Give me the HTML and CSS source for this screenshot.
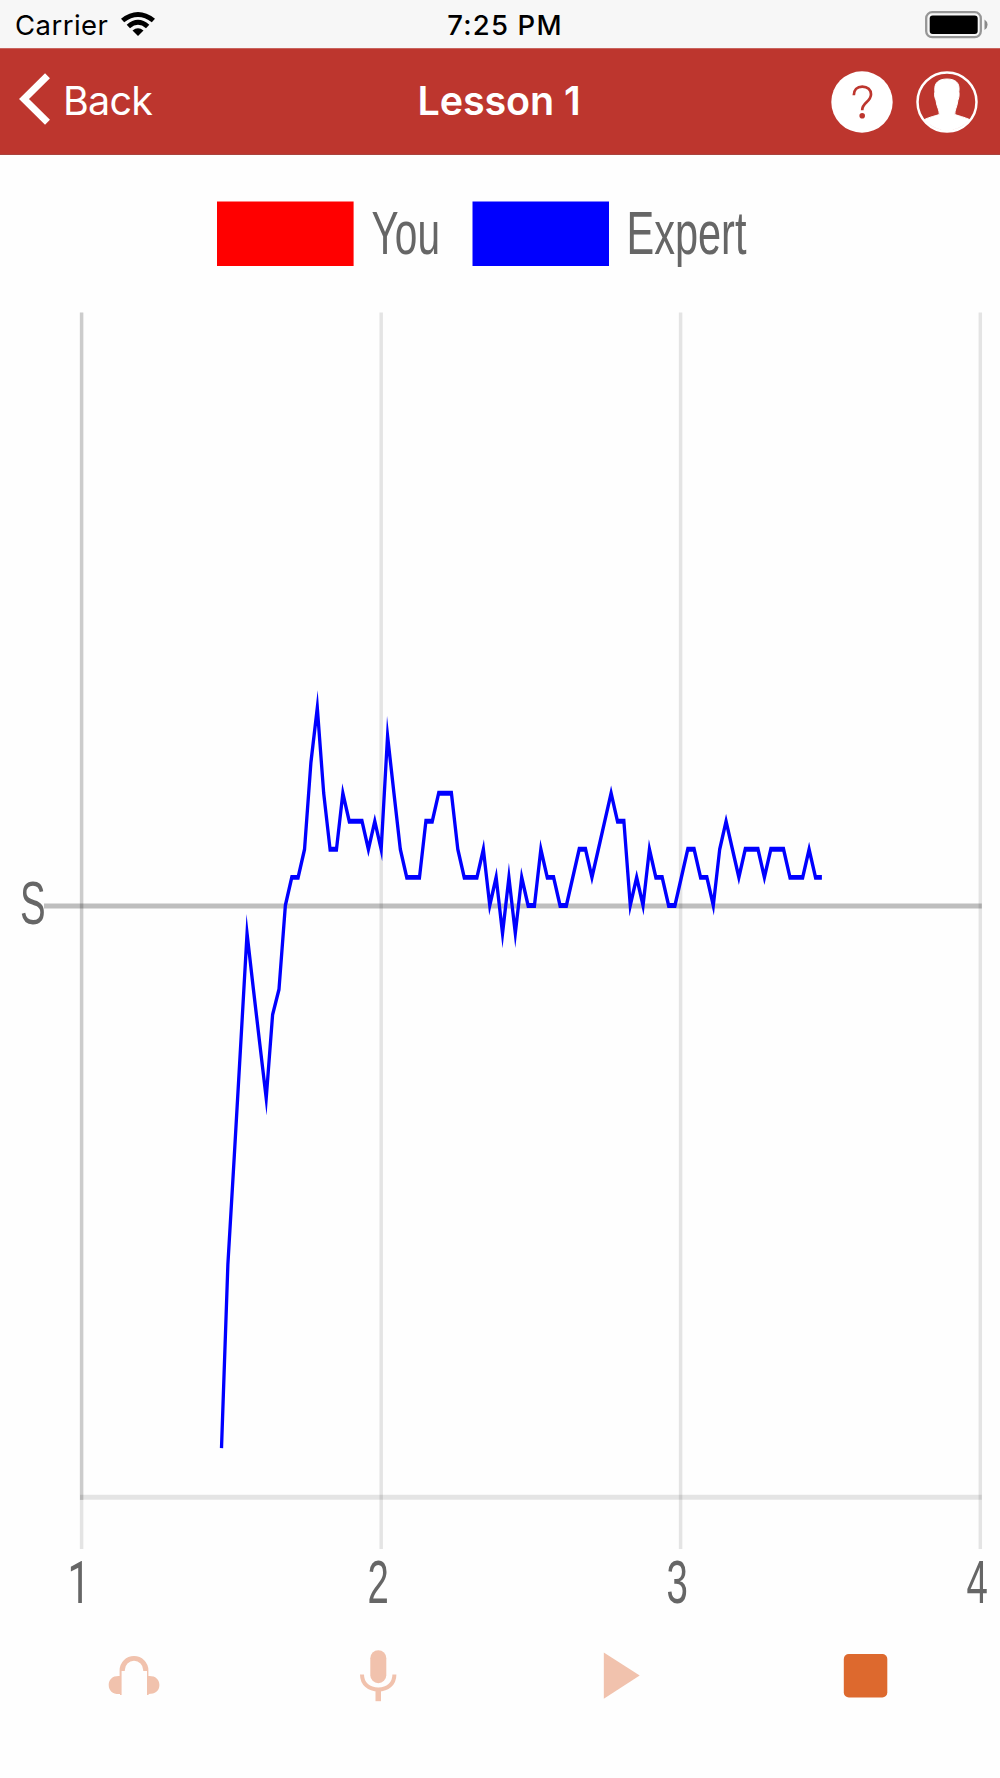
FILE: index.html
```html
<!DOCTYPE html>
<html lang="en">
<head>
<meta charset="utf-8">
<title>Lesson 1</title>
<link rel="stylesheet" href="styles.css">
</head>
<body>
<div class="status">
  <div class="carrier"><span class="carrier-name">Carrier</span>
    <svg class="wifi" width="34" height="24" viewBox="0 0 34 24">
      <path d="M0 6.7Q17-6.700 34 6.7L30.800 10.200Q17-0.200 3.200 10.200Z"/>
      <path d="M5.7 12.8Q17 2.800 28.3 12.8L25 16.200Q17 9.5 9 16.200Z"/>
      <path d="M11.5 18.6Q17 14 22.5 18.6L17 24Z"/>
    </svg>
  </div>
  <div class="clock">7:25 PM</div>
  <svg class="battery" width="64" height="28" viewBox="0 0 64 28">
    <rect x="1.2" y="1.2" width="54.6" height="25" rx="6" fill="none" stroke="#969696" stroke-width="2.3"/>
    <rect x="4.7" y="4.6" width="48" height="18.4" rx="3"/>
    <path d="M59.5 8.5Q62.6 10.5 62.6 13.7T59.5 19Z" fill="#8a8a8a"/>
  </svg>
</div>
<header class="nav">
  <div class="back">
    <svg width="31" height="52" viewBox="0 0 31 52"><path d="M28.5 2.8L5 26L28.5 49.3" fill="none" stroke="#fff" stroke-width="7"/></svg>
    <span>Back</span>
  </div>
  <h1 class="title">Lesson 1</h1>
  <div class="actions">
    <svg width="62" height="62" viewBox="0 0 62 62">
      <circle cx="31" cy="31" r="30.7" fill="#fff"/>
      <path d="M22.8 24.3C22.8 19 26 15.6 31.3 15.6C36.7 15.6 40 19 40 23.3C40 27 38 29 35.5 31.3C32.5 34 31.2 35.5 31.2 39.2" fill="none" stroke="#bd362e" stroke-width="2.7"/>
      <circle cx="31.2" cy="44.8" r="2.8" fill="#bd362e"/>
    </svg>
    <svg width="62" height="62" viewBox="0 0 62 62">
      <circle cx="31" cy="31" r="29.5" fill="none" stroke="#fff" stroke-width="2.5"/>
      <path d="M31 8C23 8 18.3 11.5 18.8 19C19 21 18.3 22 18.7 25C19 28 20 28.5 20.3 31C20.8 36 23.3 38.5 23.3 43.5C19 45 13.5 46 8.5 48.5A28.500 28.500 0 0 0 53.5 48.5C48 46 43 45 38.8 43.5C38.8 38.5 41 36 41.6 31C41.9 28.5 42.7 28 43 25C43.3 22 42.7 21 43 19C43.7 11.5 39 8 31 8Z" fill="#fff" stroke="#fff" stroke-width="1"/>
    </svg>
  </div>
</header>
<main>
  <svg class="chart" width="1000" height="1460" viewBox="0 155 1000 1460">
    <rect x="217" y="201.5" width="136.6" height="64.5" fill="#f00"/>
    <rect x="472.5" y="201.5" width="136.5" height="64.5" fill="#00f"/>
    <g class="labels">
      <text transform="translate(371.5 253.5) scale(.662 1)">You</text>
      <text transform="translate(626.5 253.5) scale(.676 1)">Expert</text>
      <text transform="translate(20 923.5) scale(.625 1)">S</text>
      <text class="one" transform="translate(67.5 1603) scale(.68 1)">1</text>
      <text transform="translate(367.5 1603) scale(.625 1)">2</text>
      <text transform="translate(666.5 1603) scale(.625 1)">3</text>
      <text transform="translate(966.5 1603) scale(.625 1)">4</text>
    </g>
    <g class="grid">
      <path d="M81.6 312.5V1549M381.2 312.5V1549M680.6 312.5V1549M980.3 312.5V1549"/>
      <path d="M81.6 312.5V1500"/>
      <path class="across" d="M80 1497.3H981.8"/>
      <path class="zero" d="M44 905.9H981.8"/>
    </g>
    <g transform="translate(221.5 905.4) scale(3.3 4.95)"><polyline id="expert" class="series"/></g>
  </svg>
</main>
<footer class="controls">
  <svg class="off" width="60" height="60" viewBox="0 5 60 60">
    <path d="M15.6 30.4A14.4 14.4 0 0 1 44.4 30.4V36C51 35.6 55.4 39 55.4 45S51 54 44.6 54V55H43V31H39.2V30A9.2 9.2 0 0 0 20.8 30V31H17.6V55H16V54C9 54.4 4.7 51 4.7 45S9 35.6 15.6 36Z"/>
  </svg>
  <svg class="off" width="60" height="60" viewBox="0 0 60 60">
    <rect x="22.3" y="5.2" width="16" height="33" rx="8"/>
    <path d="M14 29.5C14 39 21 44.5 30.3 44.5S46.4 39 46.4 29.5" fill="none" stroke="#f1c2ad" stroke-width="4"/>
    <path d="M27.5 45H33V56.2H27.5Z"/>
  </svg>
  <svg class="off" width="60" height="60" viewBox="1 0 60 60"><path d="M12.8 7.5L48.7 30.5L12.8 53.7Z"/></svg>
  <svg width="60" height="60" viewBox="0.5 0 60 60"><rect x="8.3" y="9" width="43.5" height="43.5" rx="5" fill="#dd692e"/></svg>
</footer>
<script src="chart.js"></script>
</body>
</html>
```
FILE: styles.css
```css
body {
  margin: 0;
  width: 1000px;
  height: 1778px;
  overflow: hidden;
  background: #fefefe;
  font-family: Inter, "Liberation Sans", sans-serif;
}
svg { display: block; }
.status {
  display: grid;
  grid-template-columns: 1fr auto 1fr;
  height: 48px;
  background: #f7f7f7;
  color: #000;
  font-size: 27.5px;
  line-height: 50px;
}
.carrier { display: flex; padding-left: 15px; }
.carrier-name { width: 105.5px; white-space: nowrap; letter-spacing: 0.45px; }
.wifi { margin-top: 12px; }
.clock { padding-left: 10px; font-weight: 500; letter-spacing: 1.2px; }
.battery { justify-self: end; margin: 11px 11px 0 0; }
.nav {
  display: grid;
  grid-template-columns: 1fr auto 1fr;
  align-items: center;
  box-sizing: border-box;
  height: 107px;
  padding-top: 1px;
  border-top: 1px solid #c9645e;
  border-bottom: 1px solid #a9443e;
  background: #bd362e;
  color: #fff;
  font-size: 39.5px;
}
.back { display: flex; align-items: center; gap: 13px; padding-left: 19px; margin-top: -6px; }
.back span { letter-spacing: -0.8px; padding-top: 3px; }
.title { margin: -2px 2px 0 0; font-size: 39.5px; font-weight: 600; letter-spacing: -0.1px; }
.actions { display: flex; justify-content: flex-end; gap: 23px; padding-right: 22px; }
.labels { font: 61.4px "Liberation Sans", Arial, sans-serif; fill: #666; }
.labels .one { font: 59.5px Roboto, sans-serif; }
.grid path { fill: none; stroke: rgba(0, 0, 0, 0.1); stroke-width: 3.5px; }
.grid .across { stroke-width: 5px; }
.grid .zero { stroke: rgba(0, 0, 0, 0.25); stroke-width: 5px; }
.series { fill: none; stroke: #00f; stroke-width: 1px; stroke-miterlimit: 10; }
.controls {
  display: grid;
  grid-template-columns: repeat(4, 1fr);
  place-items: center;
  height: 120px;
  padding: 0 12.5px;
}
.off { fill: #f1c2ad; }
```
FILE: chart.js
```js
// Expert pitch contour, in steps above or below the baseline.
const levels = [
  -19.36, -12.8, -8.95, -5, -1, -3, -4.95, -6.88, -3.9, -3, 0, 1, 1, 2, 5.1, 7.05, 4, 2, 2, 4,
  3, 3, 3, 2, 3, 2, 6.05, 4, 2, 1, 1, 1, 3, 3, 4, 4, 4, 2, 1, 1,
  1, 2, 0, 1, -1, 1, -1, 1, 0, 0, 2, 1, 1, 0, 0, 1, 2, 2, 1, 2,
  3, 4, 3, 3, 0, 1, 0, 2, 1, 1, 0, 0, 1, 2, 2, 1, 1, 0, 2, 3,
  2, 1, 2, 2, 2, 1, 2, 2, 2, 1, 1, 1, 2, 1, 1
];
const stepX = 6.387 / 3.3;
const stepY = 28.03 / 4.95;
document.getElementById("expert").setAttribute(
  "points",
  levels.map((v, i) => `${(i * stepX).toFixed(3)},${(-v * stepY).toFixed(3)}`).join(" ")
);
```
